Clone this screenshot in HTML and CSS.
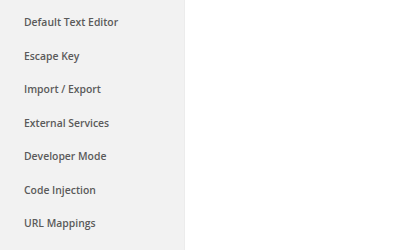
FILE: index.html
```html
<!DOCTYPE html>
<html lang="en">
<head>
    <meta charset="UTF-8">
    <title>Settings</title>
    <link rel="stylesheet" href="styles.css">
</head>
<body>
    <div class="layout">
        <nav class="sidebar">
            <a class="nav-item" href="#">Default Text Editor</a>
            <a class="nav-item" href="#">Escape Key</a>
            <a class="nav-item" href="#">Import / Export</a>
            <a class="nav-item" href="#">External Services</a>
            <a class="nav-item" href="#">Developer Mode</a>
            <a class="nav-item" href="#">Code Injection</a>
            <a class="nav-item" href="#">URL Mappings</a>
        </nav>
        <main class="content"></main>
    </div>
</body>
</html>
```

FILE: styles.css
```css
body {
    margin: 0;
    padding: 0;
    background-color: #fff;
    font-family: "Open Sans", Arial, sans-serif;
}

.layout {
    display: flex;
    height: 250px;
}

.sidebar {
    width: 184px;
    background-color: #f2f2f2;
    border-right: 1px solid #ececec;
    display: flex;
    flex-direction: column;
    padding-top: 6px;
}

.nav-item {
    display: block;
    height: 33.5px;
    line-height: 33.5px;
    padding-left: 24px;
    font-size: 10.4px;
    font-weight: 600;
    color: #5a5a5a;
    text-decoration: none;
}

.content {
    flex: 1;
}
```
